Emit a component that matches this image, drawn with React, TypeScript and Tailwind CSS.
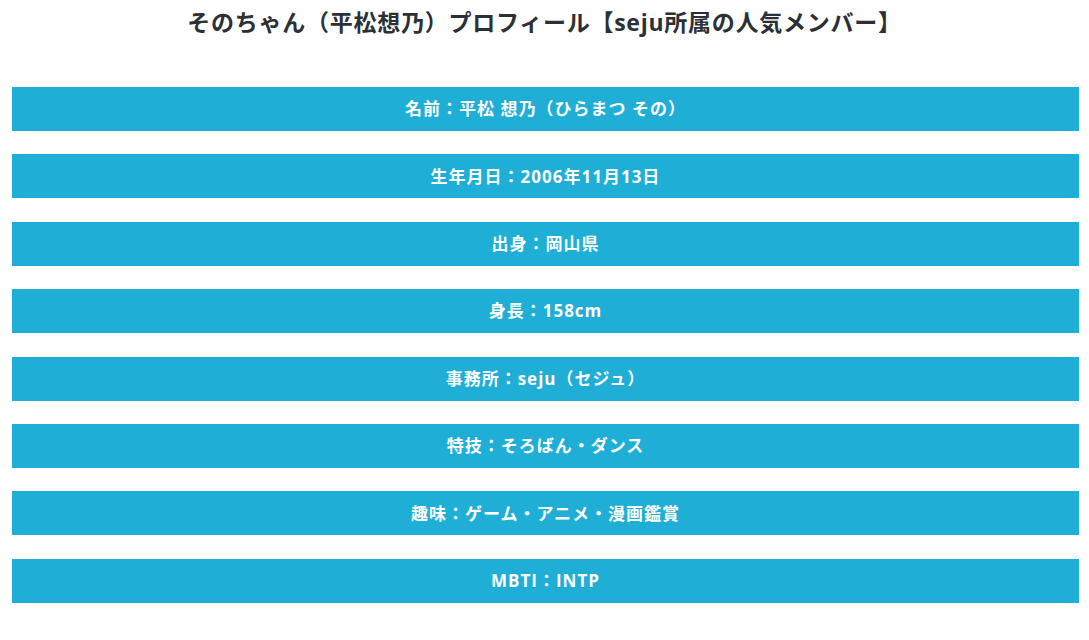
import React from "react";

const items = [
  "名前：平松 想乃（ひらまつ その）",
  "生年月日：2006年11月13日",
  "出身：岡山県",
  "身長：158cm",
  "事務所：seju（セジュ）",
  "特技：そろばん・ダンス",
  "趣味：ゲーム・アニメ・漫画鑑賞",
  "MBTI：INTP",
];

export default function App() {
  return (
    <div
      className="w-[1089px] h-[640px] bg-white flex flex-col"
      style={{ fontFamily: '"Open Sans", "Noto Sans CJK JP", "Noto Sans", sans-serif' }}
    >
      <h1 className="text-[23px] leading-[30px] font-bold text-[#2b3036] text-center tracking-[0.75px] pt-[7px] h-[87px]">
        そのちゃん（平松想乃）プロフィール【seju所属の人気メンバー】
      </h1>
      <div className="flex flex-col gap-[23.4px] px-[12px] pr-[10px]">
        {items.map((t) => (
          <div
            key={t}
            className="h-[44px] bg-[#1eaed6] flex items-center justify-center text-white font-bold text-[17px] tracking-[1px]"
          >
            {t}
          </div>
        ))}
      </div>
    </div>
  );
}
